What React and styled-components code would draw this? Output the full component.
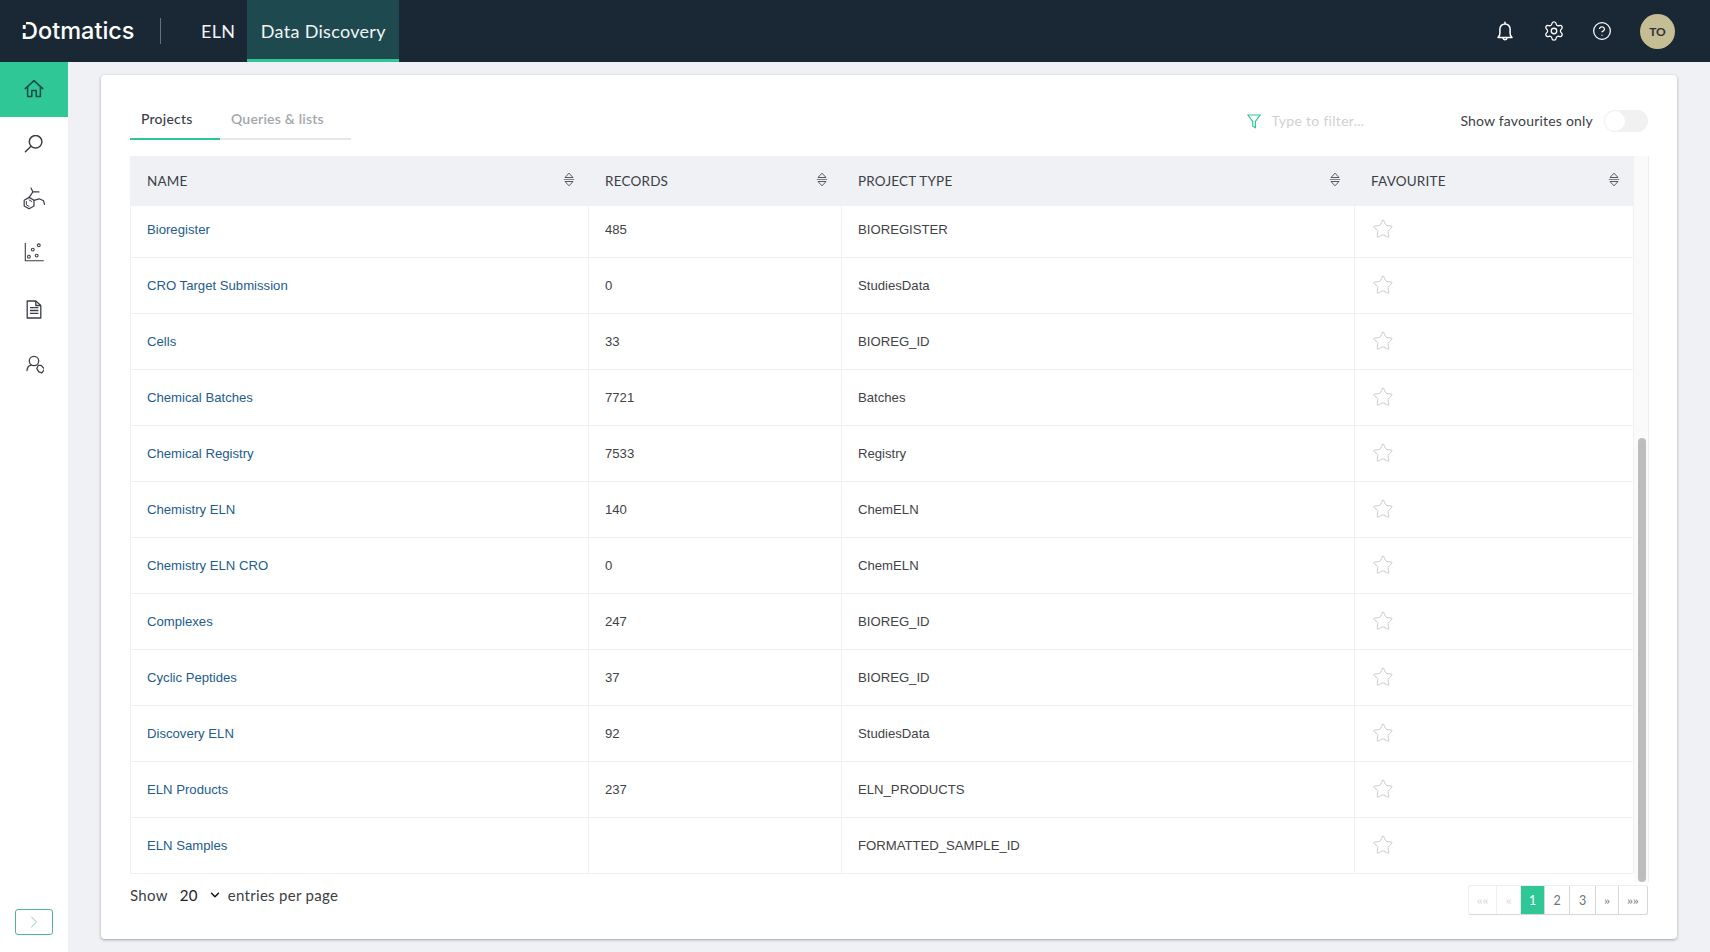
import React from 'react';
import styled, { createGlobalStyle } from 'styled-components';
import { Settings, CircleHelp, Star, ChevronRight, ChevronDown } from 'lucide-react';

const GlobalStyle = createGlobalStyle`
  html, body {
    margin: 0;
    padding: 0;
    background: #eff1f5;
  }
  * {
    box-sizing: border-box;
  }
`;

const Page = styled.div`
  width: 1710px;
  height: 952px;
  overflow: hidden;
  display: flex;
  flex-direction: column;
  font-family: Lato, 'Open Sans', sans-serif;
  color: #3b3f45;
`;

const Header = styled.header`
  height: 62px;
  flex: none;
  background: #1a2735;
  display: flex;
  align-items: stretch;
  padding-left: 21px;
`;

const Logo = styled.div`
  width: 118px;
  align-self: center;
  font-family: Inter, sans-serif;
  font-size: 23.5px;
  font-weight: 500;
  letter-spacing: 0;
  color: #fff;
  line-height: 1;
`;

const LogoMark = styled.span`
  position: relative;
  &::after {
    content: '';
    position: absolute;
    left: 1px;
    top: 3px;
    width: 4px;
    height: 18px;
    background: linear-gradient(
      #1a2735 0 6px,
      transparent 6px 10px,
      #1a2735 10px 14px,
      transparent 14px
    );
  }
`;

const Divider = styled.div`
  width: 1px;
  height: 26px;
  align-self: center;
  margin-left: 21px;
  background: #66717c;
`;

const NavItem = styled.a`
  display: flex;
  align-items: center;
  justify-content: center;
  padding: 2px 12px 0;
  margin-left: ${props => props.$gap || 0}px;
  min-width: ${props => (props.$active ? '152px' : '0')};
  font-size: 18px;
  letter-spacing: 0.3px;
  color: #f2f4f5;
  background: ${props => (props.$active ? '#1e4a4f' : 'transparent')};
  border-bottom: 3px solid ${props => (props.$active ? '#2ec795' : 'transparent')};
`;

const HeaderRight = styled.div`
  margin-left: auto;
  display: flex;
  align-items: center;
  gap: 27px;
  padding-right: 35px;
  color: #fff;
  svg:first-child {
    margin-right: 3px;
  }
`;

const Avatar = styled.div`
  width: 35px;
  height: 35px;
  margin-left: 1px;
  border-radius: 50%;
  background: #c5bd93;
  color: #2b3138;
  font-size: 12px;
  font-weight: 700;
  display: flex;
  align-items: center;
  justify-content: center;
`;

const Body = styled.div`
  flex: 1;
  display: flex;
  min-height: 0;
`;

const Sidebar = styled.aside`
  width: 68px;
  flex: none;
  background: #fff;
  display: flex;
  flex-direction: column;
`;

const SideItem = styled.div`
  height: 55px;
  display: flex;
  align-items: center;
  justify-content: center;
  color: #3a3f45;
  background: ${props => (props.$active ? '#2ec795' : 'transparent')};
  svg {
    color: ${props => (props.$active ? '#17494a' : 'inherit')};
  }
`;

const ExpandButton = styled.button`
  width: 38px;
  height: 26px;
  margin: auto 0 17px 15px;
  padding: 0;
  background: #fff;
  border: 1px solid #4fb596;
  border-radius: 3px;
  color: #6cbfa6;
  display: flex;
  align-items: center;
  justify-content: center;
`;

const Main = styled.main`
  flex: 1;
  min-width: 0;
  padding: 13px 33px;
`;

const Card = styled.section`
  height: 864px;
  background: #fff;
  border-radius: 4px;
  box-shadow: 0 1px 3px rgba(60, 66, 75, 0.45);
  padding: 25px 29px 0;
`;

const Toolbar = styled.div`
  display: flex;
  align-items: flex-start;
  height: 56px;
`;

const Tabs = styled.div`
  display: flex;
`;

const Tab = styled.div`
  height: 40px;
  width: ${props => props.$width}px;
  padding: 10px 0 0 ${props => props.$pad}px;
  font-size: 14px;
  font-weight: ${props => (props.$active ? 500 : 600)};
  letter-spacing: 0.2px;
  color: ${props => (props.$active ? '#3b3f45' : '#a3a6aa')};
  border-bottom: 2px solid ${props => (props.$active ? '#2ec795' : '#e6e7e9')};
`;

const FilterBox = styled.div`
  margin-left: auto;
  display: flex;
  align-items: center;
  height: 22px;
  margin-top: 10px;
  color: #2ec795;
`;

const FilterInput = styled.span`
  width: 189px;
  margin: -2px 0 0 10px;
  font-size: 14px;
  letter-spacing: 0.3px;
  color: #cfd1d3;
`;

const ToggleLabel = styled.span`
  margin-top: -2px;
  font-size: 14px;
  letter-spacing: 0.2px;
  color: #3b3f45;
`;

const Toggle = styled.div`
  width: 44px;
  height: 22px;
  margin-left: 11px;
  padding: 1px;
  border-radius: 11px;
  background: #f1f1f1;
  &::before {
    content: '';
    display: block;
    width: 20px;
    height: 20px;
    border-radius: 50%;
    background: #fff;
  }
`;

const TableArea = styled.div`
  display: flex;
  height: 726px;
`;

const Table = styled.table`
  width: 1503px;
  height: 717px;
  flex: none;
  border-collapse: collapse;
  table-layout: fixed;
`;

const HeadCell = styled.th`
  width: ${props => props.$width}px;
  height: 49px;
  padding: 0 13px 1px 16px;
  background: #eff1f5;
  border: 1px solid #eff1f5;
  text-align: left;
  font-size: 13.5px;
  font-weight: 400;
  letter-spacing: 0.2px;
  color: #3b3f45;
`;

const HeadInner = styled.div`
  display: flex;
  align-items: center;
  justify-content: space-between;
  color: #3b3f45;
  svg {
    margin-top: -2px;
  }
`;

const Row = styled.tr`
  height: 56px;
  &:first-child {
    height: 52px;
  }
`;

const Cell = styled.td`
  padding: 0 16px;
  border: 1px solid #eef0f2;
  border-top: 0;
  font-family: 'Liberation Sans', Arial, sans-serif;
  font-size: 13.15px;
  color: #3f4246;
  tr:first-child & {
    padding-bottom: 4px;
  }
  svg {
    display: block;
    margin: -1px 0 0 1px;
  }
`;

const ProjectLink = styled.a`
  color: #235c8c;
  text-decoration: none;
`;

const ScrollTrack = styled.div`
  width: 15px;
  flex: none;
  padding: 282px 3px 0 4px;
  background: #fafafa;
  border-right: 1px solid #eceef0;
`;

const ScrollThumb = styled.div`
  width: 8px;
  height: 444px;
  border-radius: 4px;
  background: #bdbdbd;
`;

const Footer = styled.div`
  display: flex;
  justify-content: space-between;
  align-items: flex-start;
  padding-top: 3px;
`;

const PageSize = styled.div`
  display: flex;
  align-items: center;
  height: 20px;
  font-size: 15px;
  letter-spacing: 0.3px;
  color: #3b3f45;
`;

const SizeSelect = styled.span`
  display: flex;
  align-items: center;
  margin: 0 6px 0 12px;
  gap: 10px;
  color: #1d2024;
  svg {
    color: #111;
  }
`;

const Pager = styled.div`
  display: flex;
  height: 30px;
  border-radius: 3px;
  border: 1px solid #d5d7d9;
  border-left-color: #eeeeee;
  border-top-color: #eeeeee;
`;

const PageButton = styled.div`
  width: ${props => props.$width}px;
  display: flex;
  align-items: center;
  justify-content: center;
  font-family: ${props => (props.$digit ? 'Lato, sans-serif' : "'Liberation Serif', serif")};
  font-size: ${props => (props.$digit ? 12.5 : 11.5)}px;
  color: ${props => (props.$active ? '#fff' : props.$off ? '#d3d5d7' : '#6f7378')};
  background: ${props => (props.$active ? '#2ec795' : 'transparent')};
  border-right: 1px solid ${props => (props.$off ? '#efefef' : '#d5d7d9')};
  &:last-child {
    border-right: 0;
  }
`;

const BellIcon = () => (
  <svg width="16" height="21" viewBox="0 0 16 21" fill="none" stroke="currentColor" strokeWidth="1.500" strokeLinecap="round" strokeLinejoin="round">
    <path d="M8 1.200v1.400M1 16.500c1.400-1.100 1.900-2.400 1.900-4.200V8a5.100 5.100 0 0 1 10.200 0v4.300c0 1.800.5 3.100 1.900 4.200z" />
    <path d="M6.200 17.500a1.900 1.900 0 0 0 3.600 0" />
  </svg>
);

const HomeIcon = () => (
  <svg width="20" height="20" viewBox="0 1 20 20" fill="none" stroke="currentColor" strokeWidth="1.500" strokeLinejoin="round" strokeLinecap="round">
    <path d="M1.300 9.600 10 1.600l8.700 8M3.600 8v9.600h4.200v-6h4.400v6h4.200V8" />
  </svg>
);

const SearchIcon = () => (
  <svg width="20" height="20" viewBox="0 0 20 20" fill="none" stroke="currentColor" strokeWidth="1.500" strokeLinecap="round">
    <circle cx="11.600" cy="6.800" r="6.300" />
    <path d="M7 11.300 1.400 16.800" />
  </svg>
);

const MoleculeIcon = () => (
  <svg width="24" height="26" viewBox="0 0 22 23.800" fill="none" stroke="currentColor" strokeWidth="1.100" strokeLinecap="round" strokeLinejoin="round">
    <path d="M6.500 9.500 11 12.200v5.200L6.500 20 2 17.400v-5.200z" />
    <path d="M4 13.300v3l2.500 1.500M9 13.300l-2.500-1.500" strokeWidth="0.900" />
    <path d="M6.500 9.500 10 4.500 8.300 1M10 4.500h5.500M11 12.200l4.800-1.400 4 1.800.8 3.400" />
  </svg>
);

const ScatterIcon = () => (
  <svg width="20" height="24" viewBox="0 1 20 24" fill="none" stroke="currentColor" strokeWidth="1.100" strokeLinecap="round">
    <path d="M1.300 1v17.700H19.300" />
    <circle cx="4.900" cy="14.700" r="1.400" />
    <circle cx="8.800" cy="7.600" r="1.400" />
    <circle cx="12.700" cy="13.600" r="1.400" />
    <circle cx="14.800" cy="3.300" r="1.400" />
  </svg>
);

const DocumentIcon = () => (
  <svg width="16" height="19" viewBox="0 0 16 19" fill="none" stroke="currentColor" strokeWidth="1.300" strokeLinejoin="round">
    <path d="M1.200 1h8.600l5 4.500v12.500H1.200z" />
    <path d="M9.800 1v4.500h5M4 7.700h8.400M4 10.500h8.400M4 13.300h8.400" />
  </svg>
);

const UserTagIcon = () => (
  <svg width="20" height="20" viewBox="-1 0 20 20" fill="none" stroke="currentColor" strokeWidth="1.300" strokeLinecap="round" strokeLinejoin="round">
    <circle cx="9" cy="6" r="4.700" />
    <path d="M2 15.500c.3-3 2-4.900 4-5.300" />
    <path d="M13.200 10.400h3l3.500 3.800-2.900 3.600-3-.9-2-3.300z" />
  </svg>
);

const FunnelIcon = () => (
  <svg width="14" height="15" viewBox="0 0 14 15" fill="none" stroke="currentColor" strokeWidth="1.200" strokeLinejoin="round">
    <path d="M.8 1h12.400L8.400 7.300v6.500L5.700 12V7.300z" />
  </svg>
);

const SortIcon = () => (
  <svg width="12" height="15" viewBox="0 0 12 15" fill="none" stroke="#55595f" strokeWidth="1">
    <path d="M2 5.500 6 1.200l4 4.300z" />
    <path d="M.8 7.500h10.400" stroke="#7d8086" />
    <path d="M2 9.500l4 4.300 4-4.300z" />
  </svg>
);

const projects = [
  ['Bioregister', '485', 'BIOREGISTER'],
  ['CRO Target Submission', '0', 'StudiesData'],
  ['Cells', '33', 'BIOREG_ID'],
  ['Chemical Batches', '7721', 'Batches'],
  ['Chemical Registry', '7533', 'Registry'],
  ['Chemistry ELN', '140', 'ChemELN'],
  ['Chemistry ELN CRO', '0', 'ChemELN'],
  ['Complexes', '247', 'BIOREG_ID'],
  ['Cyclic Peptides', '37', 'BIOREG_ID'],
  ['Discovery ELN', '92', 'StudiesData'],
  ['ELN Products', '237', 'ELN_PRODUCTS'],
  ['ELN Samples', '', 'FORMATTED_SAMPLE_ID'],
];

const columns = [
  ['NAME', 458],
  ['RECORDS', 253],
  ['PROJECT TYPE', 513],
  ['FAVOURITE', 279],
];

const pages = [
  { text: '««', width: 28, off: true },
  { text: '«', width: 24, off: true },
  { text: '1', width: 24, active: true, digit: true },
  { text: '2', width: 25, digit: true },
  { text: '3', width: 26, digit: true },
  { text: '»', width: 23 },
  { text: '»»', width: 28 },
];

const App = () => {
  return (
    <Page>
      <GlobalStyle />
      <Header>
        <Logo><LogoMark>D</LogoMark>otmatics</Logo>
        <Divider />
        <NavItem $gap={28}>ELN</NavItem>
        <NavItem $active>Data Discovery</NavItem>
        <HeaderRight>
          <BellIcon />
          <Settings size={22} strokeWidth={1.4} />
          <CircleHelp size={20} strokeWidth={1.5} />
          <Avatar>TO</Avatar>
        </HeaderRight>
      </Header>
      <Body>
        <Sidebar>
          <SideItem $active><HomeIcon /></SideItem>
          <SideItem><SearchIcon /></SideItem>
          <SideItem><MoleculeIcon /></SideItem>
          <SideItem><ScatterIcon /></SideItem>
          <SideItem><DocumentIcon /></SideItem>
          <SideItem><UserTagIcon /></SideItem>
          <ExpandButton><ChevronRight size={20} strokeWidth={1} /></ExpandButton>
        </Sidebar>
        <Main>
          <Card>
            <Toolbar>
              <Tabs>
                <Tab $active $width={90} $pad={11}>Projects</Tab>
                <Tab $width={131} $pad={11}>Queries &amp; lists</Tab>
              </Tabs>
              <FilterBox>
                <FunnelIcon />
                <FilterInput>Type to filter...</FilterInput>
                <ToggleLabel>Show favourites only</ToggleLabel>
                <Toggle />
              </FilterBox>
            </Toolbar>
            <TableArea>
              <Table>
                <thead>
                  <tr>
                    {columns.map(([title, width]) => (
                      <HeadCell key={title} $width={width}>
                        <HeadInner>{title}<SortIcon /></HeadInner>
                      </HeadCell>
                    ))}
                  </tr>
                </thead>
                <tbody>
                  {projects.map(([name, records, type]) => (
                    <Row key={name}>
                      <Cell><ProjectLink>{name}</ProjectLink></Cell>
                      <Cell>{records}</Cell>
                      <Cell>{type}</Cell>
                      <Cell><Star size={22} strokeWidth={1} color="#c4c6c9" /></Cell>
                    </Row>
                  ))}
                </tbody>
              </Table>
              <ScrollTrack><ScrollThumb /></ScrollTrack>
            </TableArea>
            <Footer>
              <PageSize>
                Show
                <SizeSelect>20 <ChevronDown size={14} strokeWidth={2.5} /></SizeSelect>
                entries per page
              </PageSize>
              <Pager>
                {pages.map(page => (
                  <PageButton key={page.text} $width={page.width} $active={page.active} $off={page.off} $digit={page.digit}>
                    {page.text}
                  </PageButton>
                ))}
              </Pager>
            </Footer>
          </Card>
        </Main>
      </Body>
    </Page>
  );
};

export default App;
